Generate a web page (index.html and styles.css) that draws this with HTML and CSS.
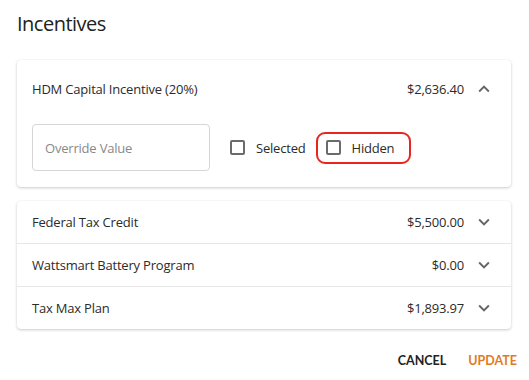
FILE: index.html
```html
<!DOCTYPE html>
<html lang="en">
<head>
    <meta charset="UTF-8">
    <title>Incentives</title>
    <link rel="stylesheet" href="styles.css">
</head>
<body>
    <div class="dialog">
        <h1 class="title">Incentives</h1>

        <div class="card">
            <div class="row row-open">
                <span class="name">HDM Capital Incentive (20%)</span>
                <span class="amount">$2,636.40</span>
                <svg class="chevron" viewBox="0 0 24 24"><path d="M7.41 15.41 12 10.83l4.59 4.58L18 14l-6-6-6 6z"/></svg>
            </div>
            <div class="details">
                <input type="text" class="override" placeholder="Override Value">
                <label class="check"><span class="box"></span>Selected</label>
                <label class="check check-marked"><span class="box"></span>Hidden</label>
            </div>
        </div>

        <div class="card">
            <div class="row">
                <span class="name">Federal Tax Credit</span>
                <span class="amount">$5,500.00</span>
                <svg class="chevron" viewBox="0 0 24 24"><path d="M7.41 8.59 12 13.17l4.59-4.58L18 10l-6 6-6-6z"/></svg>
            </div>
            <div class="row">
                <span class="name">Wattsmart Battery Program</span>
                <span class="amount">$0.00</span>
                <svg class="chevron" viewBox="0 0 24 24"><path d="M7.41 8.59 12 13.17l4.59-4.58L18 10l-6 6-6-6z"/></svg>
            </div>
            <div class="row">
                <span class="name">Tax Max Plan</span>
                <span class="amount">$1,893.97</span>
                <svg class="chevron" viewBox="0 0 24 24"><path d="M7.41 8.59 12 13.17l4.59-4.58L18 10l-6 6-6-6z"/></svg>
            </div>
        </div>

        <div class="actions">
            <button class="btn">CANCEL</button>
            <button class="btn btn-primary">UPDATE</button>
        </div>
    </div>
</body>
</html>
```

FILE: styles.css
```css
body {
    margin: 0;
    font-family: "Open Sans", "Noto Sans", sans-serif;
    background: #ffffff;
    color: #333333;
}
.dialog {
    padding: 10px 18px 0 17px;
}
.title {
    font-size: 20px;
    font-weight: 400;
    letter-spacing: -0.5px;
    color: #222222;
    margin: 0 0 22px 0;
    line-height: 28px;
}
.card {
    background: #ffffff;
    border-radius: 4px;
    box-shadow: 0 1px 3px rgba(0,0,0,0.2), 0 0 1px rgba(0,0,0,0.08);
    margin-bottom: 14px;
}
.row {
    display: flex;
    align-items: center;
    height: 42px;
    padding: 0 16px 0 15px;
    font-size: 13px;
    letter-spacing: -0.2px;
    color: #2b2b2b;
    border-top: 1px solid #e6e6e6;
}
.row:first-child {
    border-top: none;
}
.row-open {
    height: 58px;
}
.name {
    flex: 1;
}
.amount {
    margin-right: 9px;
}
.chevron {
    width: 22px;
    height: 22px;
    fill: #666666;
}
.details {
    display: flex;
    align-items: center;
    padding: 6px 15px 16px 15px;
}
.override {
    width: 178px;
    height: 47px;
    box-sizing: border-box;
    border: 1px solid #d6d6d6;
    border-radius: 4px;
    padding: 0 12px;
    font-family: inherit;
    font-size: 13px;
    letter-spacing: -0.2px;
    color: #333333;
    margin-right: 20px;
}
.override::placeholder {
    color: #888888;
}
.check {
    display: flex;
    align-items: center;
    box-sizing: border-box;
    height: 32px;
    font-size: 13px;
    letter-spacing: -0.2px;
    color: #2b2b2b;
}
.check-marked {
    margin-left: 10px;
    padding: 0 15px 0 8px;
    border: 2px solid #e8261e;
    border-radius: 9px;
}
.box {
    box-sizing: border-box;
    width: 15px;
    height: 15px;
    border: 2px solid #6b6b6b;
    border-radius: 2px;
    margin-right: 11px;
}
.actions {
    display: flex;
    justify-content: flex-end;
    gap: 22px;
    padding-top: 10px;
    margin-right: -6px;
}
.btn {
    background: none;
    border: none;
    padding: 0;
    font-family: "Lato", sans-serif;
    font-weight: 700;
    font-size: 12.5px;
    color: #222222;
    cursor: pointer;
}
.btn-primary {
    color: #e07b25;
}
```
